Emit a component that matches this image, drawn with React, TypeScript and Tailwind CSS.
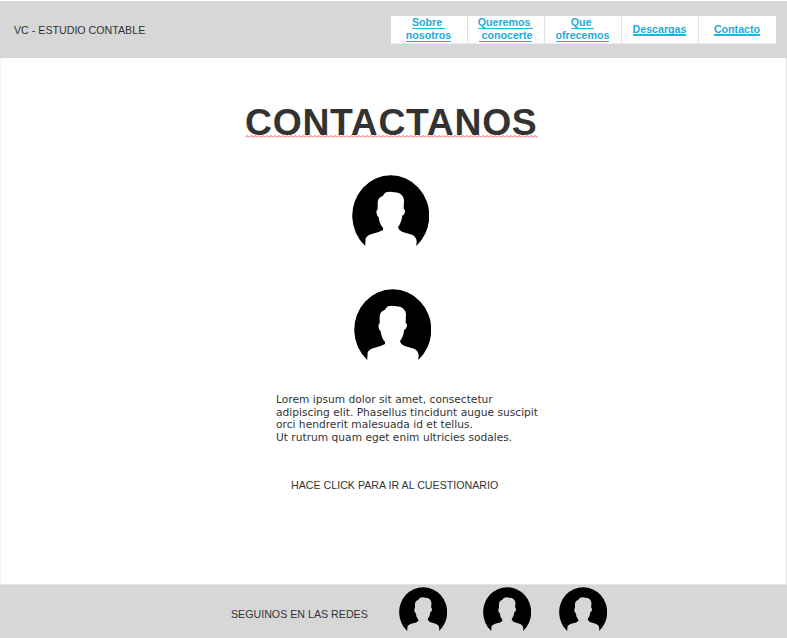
import React from 'react';

function Avatar({ className }: { className: string }) {
  return (
    <svg viewBox="38 31 231 214" preserveAspectRatio="none" className={`block shrink-0 ${className}`} aria-hidden="true">
      <path
        fill="#000"
        d="M77.500 245A115.500 122 0 1 1 231 245L232 232Q232 218 218 211L190 203Q178 198 176 188Q186 176 189 153Q195 153 197 142Q197 134 193 133L194 106Q190 84 165 83Q150 79 138 84L130 94Q116 98 115 114L115 134Q110 136 112 148Q114 156 118 158Q121 180 131 190L131 197Q118 205 100 208Q84 212 79 222Z"
      />
    </svg>
  );
}

function NavItem({ lines, className }: { lines: string[]; className: string }) {
  return (
    <a
      href="#"
      className={`flex h-[28px] flex-col items-center justify-center border-b border-b-[#ececec] bg-white pr-px text-[10.67px] font-bold text-[#1eaadc] ${className}`}
    >
      {lines.map((line) => (
        <span key={line} className="h-[12px] whitespace-pre border-b border-[#1eb4e6] leading-[11px] not-first:mt-px not-first:h-[12px] only:h-[13px] only:border-b-2 only:leading-[12px]">
          {line}
        </span>
      ))}
    </a>
  );
}

export default function App() {
  return (
    <div className="flex h-[638px] w-[787px] flex-col overflow-hidden bg-white font-['Liberation_Sans',Arial,sans-serif] text-[#333]">
      <header className="mt-px flex h-[57px] shrink-0 items-start justify-between bg-[#d7d7d7] pl-[14px] pr-[11px]">
        <span className="mt-[23px] whitespace-nowrap text-[10.67px] leading-[12px]">VC - ESTUDIO CONTABLE</span>
        <nav className="mt-[15px] flex">
          <NavItem className="w-[76px]" lines={['Sobre ', 'nosotros']} />
          <NavItem className="w-[77px] border-l border-l-[#e2e2e2]" lines={['Queremos ', ' conocerte']} />
          <NavItem className="w-[77px] border-l border-l-[#e2e2e2]" lines={['Que ', 'ofrecemos']} />
          <NavItem className="w-[77px] border-l border-l-[#e2e2e2]" lines={['Descargas']} />
          <NavItem className="w-[78px] border-l border-l-[#e2e2e2]" lines={['Contacto']} />
        </nav>
      </header>

      <main className="flex h-[526px] shrink-0 flex-col items-start border-x border-l-[#f5f5f5] border-r-[#e2e2e2]">
        <h1 className="ml-[244px] mt-[43px] h-[35px] whitespace-nowrap text-[37.33px] font-bold leading-[42px] tracking-[0.7px]">
          CONTACTANOS
        </h1>
        <svg className="-mt-px ml-[244px] block h-[3px] w-[293px]" aria-hidden="true">
          <defs>
            <pattern id="squiggle" width="4" height="3" patternUnits="userSpaceOnUse">
              <path d="M0 2.500L2 .5L4 2.500" fill="none" stroke="#f05060" strokeWidth="1" />
            </pattern>
          </defs>
          <rect width="293" height="3" fill="url(#squiggle)" />
        </svg>
        <Avatar className="ml-[351px] mt-[37px] h-[71px] w-[77px]" />
        <Avatar className="ml-[353px] mt-[43px] h-[71px] w-[77px]" />
        <p className="ml-[275px] mt-[34px] whitespace-nowrap font-['DejaVu_Sans',Verdana,sans-serif] text-[10.67px] leading-[12.600px]">
          Lorem ipsum dolor sit amet, consectetur<br />
          adipiscing elit. Phasellus tincidunt augue suscipit<br />
          orci hendrerit malesuada id et tellus.<br />
          Ut rutrum quam eget enim ultricies sodales.
        </p>
        <a href="#" className="ml-[290px] mt-[35px] whitespace-nowrap text-[10.67px] leading-[12px]">
          HACE CLICK PARA IR AL CUESTIONARIO
        </a>
      </main>

      <footer className="flex h-[54px] shrink-0 items-start border-t border-[#e6e6e6] bg-[#d7d7d7] pl-[231px]">
        <span className="mt-[23px] w-[167.500px] whitespace-nowrap text-[10.67px] leading-[12px]">SEGUINOS EN LAS REDES</span>
        <div className="mt-[2px] flex">
          <Avatar className="h-[44px] w-[48px]" />
          <Avatar className="ml-[36px] h-[44px] w-[48px]" />
          <Avatar className="ml-[28.500px] h-[44px] w-[48px]" />
        </div>
      </footer>
    </div>
  );
}
